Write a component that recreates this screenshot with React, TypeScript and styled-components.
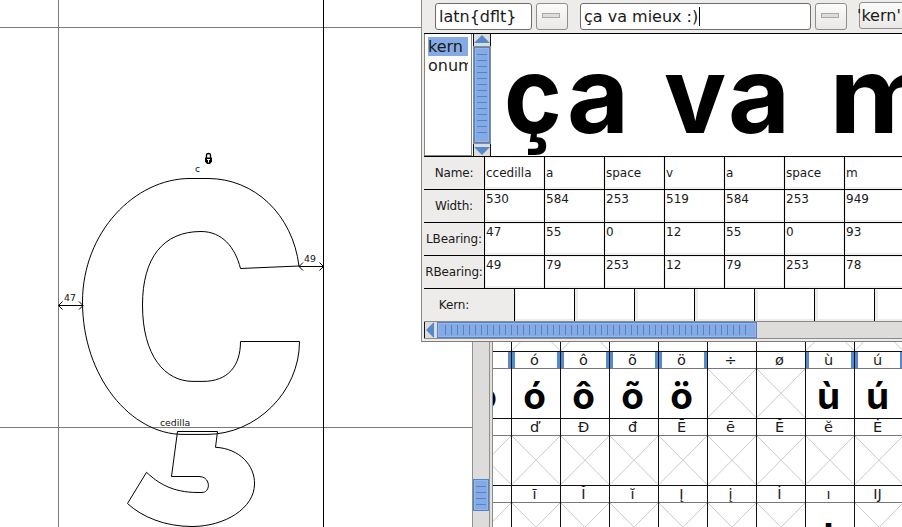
import React from "react";
import styled, { createGlobalStyle, css } from "styled-components";

const UI_FONT = '"DejaVu Sans", "Liberation Sans", sans-serif';

const GlobalStyle = createGlobalStyle`
  *, *::before, *::after { box-sizing: border-box; }
  body { margin: 0; background: #fff; font-family: ${UI_FONT}; color: #1a1a1a; }
`;

const Desktop = styled.main`
  position: relative;
  width: 902px;
  height: 527px;
  overflow: hidden;
  background: #fff;
`;

/* ---------- outline window ---------- */

const OutlineWindow = styled.section`
  position: absolute;
  inset: 0 auto 0 0;
  width: 490px;
  display: flex;
`;

const OutlineCanvas = styled.svg`
  flex: 0 0 472px;
  height: 527px;
  display: block;
  font: 9.3px ${UI_FONT};
`;

const OutlineScroll = styled.div`
  flex: 0 0 18px;
  padding-top: 479px;
  background: #dddcda;
  border-left: 1px solid #8f8f8d;
  border-right: 1px solid #8f8f8d;
`;

const grip = css`
  border: 1px solid #5184c8;
  background: #86abe4;
  box-shadow: inset 0 0 0 1px #94b7ea;
`;

const OutlineThumb = styled.div`
  ${grip}
  height: 32px;
  padding: 6px 2px 5px 2px;
  &::before {
    content: "";
    display: block;
    height: 19px;
    background: repeating-linear-gradient(to bottom, #4f85cb 0 1px, transparent 1px 6px);
  }
`;

/* ---------- font window ---------- */

const FontWindow = styled.section`
  position: absolute;
  left: 490px;
  top: 284px;
  width: 412px;
  height: 243px;
  overflow: hidden;
  border-left: 2px solid #e1e0de;
  box-shadow: inset 1px 0 0 #8a8a88;
  padding-left: 1px;
`;

const GlyphGrid = styled.div`
  display: grid;
  grid-template-columns: 19px repeat(8, 49px);
  grid-auto-rows: 67px;
`;

const Cell = styled.div`
  display: flex;
  flex-direction: column;
  overflow: hidden;
  border-top: 1px solid #111;
  border-right: 1px solid #111;
`;

const CellLabel = styled.div<{ $marked?: boolean }>`
  flex: 0 0 17px;
  border-bottom: 1px solid #777;
  box-shadow: ${(p) => (p.$marked ? "inset 3px 0 0 #5589ce, inset -3px 0 0 #5589ce" : "none")};
  font-size: 14.5px;
  line-height: 17px;
  padding-right: 3px;
  text-align: center;
  overflow: hidden;
`;

const CellGlyph = styled.div`
  flex: 1;
  display: flex;
  justify-content: center;
  padding-right: 3px;
  font: 700 37px/54px Inter, "Liberation Sans", sans-serif;
  color: #000;
`;

const CrossSvg = styled.svg`
  display: block;
  flex: none;
  width: 48px;
  height: 49px;
`;

const Cross = () => (
  <CrossSvg viewBox="0 0 48 49">
    <path d="M0 0L48 48.500M0 48.500L48 0" stroke="#c4c4c4" strokeWidth="0.900" />
  </CrossSvg>
);

type GlyphCell = { label: string; glyph?: string; blank?: boolean };

const gridRows: GlyphCell[][] = [
  [
    { label: "", blank: true },
    { label: "" },
    { label: "" },
    { label: "", blank: true },
    { label: "", blank: true },
    { label: "", blank: true },
    { label: "", blank: true },
    { label: "" },
    { label: "" },
  ],
  [
    { label: "", glyph: "ò" },
    { label: "ó", glyph: "ó" },
    { label: "ô", glyph: "ô" },
    { label: "õ", glyph: "õ" },
    { label: "ö", glyph: "ö" },
    { label: "÷" },
    { label: "ø" },
    { label: "ù", glyph: "ù" },
    { label: "ú", glyph: "ú" },
  ],
  ["", "ď", "Đ", "đ", "Ē", "ē", "Ĕ", "ĕ", "Ė"].map((label) => ({ label })),
  [
    ...["", "ī", "Ĭ", "ĭ", "Į", "į", "İ"].map((label) => ({ label })),
    { label: "ı", glyph: "ı" },
    { label: "Ĳ" },
  ],
];

const EdgeCell = styled(Cell)`
  ${CellGlyph} {
    justify-content: flex-end;
    padding-right: 14px;
  }
  ${CrossSvg} {
    margin-left: -30px;
  }
  ${CellLabel} {
    box-shadow: none;
  }
`;

const EdgeMark = styled(CellLabel)`
  && {
    box-shadow: inset -3px 0 0 #5589ce;
  }
`;

/* ---------- metrics window ---------- */

const MetricsWindow = styled.section`
  position: absolute;
  left: 421px;
  top: 0;
  width: 481px;
  height: 342px;
  overflow: hidden;
  background: #edeceb;
  border-left: 1px solid #8b8b89;
  border-bottom: 1px solid #7c7c7a;
  padding: 0 0 2px 2px;
  display: flex;
  flex-direction: column;
`;

const Toolbar = styled.div`
  flex: 0 0 33px;
  display: flex;
  align-items: flex-start;
  padding: 3px 0 0 11px;
  font-size: 16px;
  white-space: nowrap;
`;

const Field = styled.div<{ $width: number; $gap: number }>`
  flex: 0 0 ${(p) => p.$width}px;
  height: 27px;
  margin-right: ${(p) => p.$gap}px;
  padding-left: 3px;
  display: flex;
  align-items: center;
  border: 1px solid #6c6c69;
  border-radius: 3px;
  background: #fff;
`;

const Caret = styled.span`
  width: 1px;
  height: 19px;
  margin-left: 1px;
  background: #000;
`;

const MenuButton = styled.div<{ $gap: number }>`
  flex: 0 0 32px;
  height: 27px;
  margin-right: ${(p) => p.$gap}px;
  display: grid;
  place-items: center;
  padding-bottom: 2px;
  padding-right: 2px;
  border: 1px solid #8e8e8b;
  border-radius: 3px;
  background: linear-gradient(#fbfbfa, #e9e8e6);
  &::before {
    content: "";
    width: 18px;
    height: 5px;
    border: 1px solid #a9a9a6;
    background: #dedddb;
  }
`;

const KernButton = styled.div`
  flex: 0 0 60px;
  height: 27px;
  margin-top: -1px;
  border: 1px solid #8e8e8b;
  border-radius: 3px;
  background: linear-gradient(#fbfbfa, #e9e8e6);
  line-height: 25px;
  text-indent: -3px;
`;

const Preview = styled.div`
  flex: 0 0 123px;
  min-height: 0;
  height: 123px;
  overflow: hidden;
  display: flex;
  border-top: 1px solid #000;
  background: #fff;
`;

const FeatureList = styled.ul`
  flex: 0 0 48px;
  min-width: 0;
  margin: 0;
  padding: 3px;
  list-style: none;
  border: 1px solid #858583;
  border-top: 0;
  font-size: 16px;
`;

const Feature = styled.li<{ $selected?: boolean }>`
  height: 19px;
  line-height: 20px;
  overflow: hidden;
  background: ${(p) => (p.$selected ? "#86abe4" : "transparent")};
`;

const FeatureScroll = styled.div`
  flex: 0 0 18px;
  margin-left: 1px;
  display: flex;
  flex-direction: column;
  border-left: 1px solid #111;
  border-right: 1px solid #111;
  background: #dddcda;
`;

const Arrow = styled.svg`
  display: block;
  flex: none;
`;

const FeatureThumb = styled.div`
  ${grip}
  flex: 1;
  padding: 6px 2px;
  outline: 1px solid #8d8b86;
  &::before {
    content: "";
    display: block;
    width: 10px;
    height: 80px;
    background: repeating-linear-gradient(to bottom, #4f85cb 0 1px, transparent 1px 6px);
  }
`;

const Sample = styled.div`
  flex: 1;
  display: flex;
  min-width: 0;
  overflow: hidden;
  padding-left: 13px;
  font: 700 107px/121px Inter, "Liberation Sans", sans-serif;
  color: #000;
`;

const SampleGlyph = styled.span<{ $advance: number; $stretch: number }>`
  flex: 0 0 ${(p) => p.$advance}px;
  white-space: pre;
  transform: scaleX(${(p) => p.$stretch});
  transform-origin: left;
`;

const sample = [
  { char: "ç", advance: 62.5, stretch: 0.92 },
  { char: "a", advance: 69.7, stretch: 1 },
  { char: " ", advance: 27.2, stretch: 1 },
  { char: "v", advance: 64.2, stretch: 0.97 },
  { char: "a", advance: 69.7, stretch: 1 },
  { char: " ", advance: 31, stretch: 1 },
  { char: "m", advance: 113, stretch: 1.12 },
];

const MetricRow = styled.div`
  flex: 0 0 33px;
  display: flex;
  border-top: 1px solid #000;
  font-size: 12px;
`;

const MetricLabel = styled.div<{ $width?: number }>`
  flex: 0 0 ${(p) => p.$width ?? 60}px;
  line-height: 32px;
  text-align: center;
  white-space: nowrap;
  letter-spacing: -0.15px;
`;

const MetricCell = styled.div<{ $centered?: boolean }>`
  flex: 0 0 60px;
  padding-left: 1px;
  border-left: 1px solid #000;
  background: #fff;
  box-shadow: inset 1px 1px 0 #f0efee, inset -1px -2px 0 #f0efee;
  line-height: ${(p) => (p.$centered ? "32px" : "18px")};
`;

const KernCell = styled.div<{ $inset: number }>`
  flex: 0 0 60px;
  border-left: 1px solid #000;
  background: #fff;
  box-shadow: inset ${(p) => p.$inset}px 0 0 #edeceb, inset 0 -2px 0 #edeceb;
`;

const MetricsScroll = styled.div`
  flex: 1;
  display: flex;
  border-top: 1px solid #8b8b89;
  border-bottom: 1px solid #8b8b89;
  background: #dddcda;
`;

const MetricsThumb = styled.div`
  ${grip}
  width: 320px;
  padding: 2px 7px;
  &::before {
    content: "";
    display: block;
    height: 10px;
    background: repeating-linear-gradient(to right, #4f85cb 0 1px, transparent 1px 6px);
  }
`;

const metrics = [
  { title: "Name:", values: ["ccedilla", "a", "space", "v", "a", "space", "m"] },
  { title: "Width:", values: ["530", "584", "253", "519", "584", "253", "949"] },
  { title: "LBearing:", values: ["47", "55", "0", "12", "55", "0", "93"] },
  { title: "RBearing:", values: ["49", "79", "253", "12", "79", "253", "78"] },
];

function Outline() {
  return (
    <OutlineCanvas viewBox="0 0 472 527">
      <g shapeRendering="crispEdges" stroke="#7b7b76" fill="none">
        <path d="M0 27.5H472M0 427.5H472M58.5 0V527" />
        <path d="M323.5 0V527" stroke="#000" />
      </g>
      <g fill="none" stroke="#000" strokeWidth="1">
        <path d="M299 266C292.500 214 254 178.500 208 178.500H190C135 178.500 82.500 232 82.500 302C82.500 377 131 434.400 183 434.400H207C256 434.400 299.500 392 299.500 341.500H240.500C240.500 366 228 381.400 203 381.400H193C165 381.400 142.500 356 142.500 305C142.500 258 163 231.500 201 231.500C222 231.500 235 247 240.500 268.500Z" />
        <path d="M177.500 431.500H217.500L215.500 447.300C240 448.500 255 466 254.500 484C254.500 508 225 526.500 192 526.500C165 526.500 142 517 127.500 503.500L146.500 472.300C158 483 172 492.500 198 492.500H202C211 492.500 211 476.500 199 476.500H171.500Z" />
        <path d="M59 305.500H83M62.500 301.500L58.500 305.500L62.500 309.500M79 301.500L83 305.500L79 309.500M299 266.500H323M303 262.500L299 266.500L303 270.500M319.500 262.500L323.500 266.500L319.500 270.500" />
      </g>
      <g fill="#111">
        <text x="195" y="172">c</text>
        <text x="160" y="426">cedilla</text>
        <text x="64" y="301">47</text>
        <text x="304" y="262">49</text>
      </g>
      <path d="M206.500 158V155Q206.500 153.500 208.500 153.500Q210.500 153.500 210.500 155V158" fill="none" stroke="#000" strokeWidth="1.300" />
      <path d="M205 157.500H212V161.500L210 164H207L205 161.500Z" fill="#000" />
      <path d="M207 159.500H210M208.500 160V162.500" stroke="#fff" strokeWidth="1" />
    </OutlineCanvas>
  );
}

function FontGrid() {
  return (
    <GlyphGrid>
      {gridRows.map((row, r) =>
        row.map((cell, c) => {
          const Box = c === 0 ? EdgeCell : Cell;
          const Label = c === 0 && cell.glyph ? EdgeMark : CellLabel;
          return (
            <Box key={`${r}-${c}`}>
              <Label $marked={Boolean(cell.glyph) && cell.glyph !== "ı"}>{cell.label}</Label>
              {cell.glyph ? <CellGlyph>{cell.glyph}</CellGlyph> : cell.blank ? null : <Cross />}
            </Box>
          );
        })
      )}
    </GlyphGrid>
  );
}

export default function App() {
  return (
    <>
      <GlobalStyle />
      <Desktop>
        <OutlineWindow>
          <Outline />
          <OutlineScroll>
            <OutlineThumb />
          </OutlineScroll>
        </OutlineWindow>
        <FontWindow>
          <FontGrid />
        </FontWindow>
        <MetricsWindow>
          <Toolbar>
            <Field $width={97} $gap={4}>{"latn{dflt}"}</Field>
            <MenuButton $gap={12} />
            <Field $width={231} $gap={4}>
              ça va mieux :)
              <Caret />
            </Field>
            <MenuButton $gap={12} />
            <KernButton>'kern'</KernButton>
          </Toolbar>
          <Preview>
            <FeatureList>
              <Feature $selected>kern</Feature>
              <Feature>onum</Feature>
            </FeatureList>
            <FeatureScroll>
              <Arrow width="16" height="13" viewBox="0 0 16 13">
                <path d="M0 9L8 1L16 9Z" fill="#5589ce" />
              </Arrow>
              <FeatureThumb />
              <Arrow width="16" height="13" viewBox="0 0 16 13">
                <path d="M0 4L8 12L16 4Z" fill="#5589ce" />
              </Arrow>
            </FeatureScroll>
            <Sample>
              {sample.map((g, i) => (
                <SampleGlyph key={i} $advance={g.advance} $stretch={g.stretch}>
                  {g.char}
                </SampleGlyph>
              ))}
            </Sample>
          </Preview>
          {metrics.map((m) => (
            <MetricRow key={m.title}>
              <MetricLabel>{m.title}</MetricLabel>
              {m.values.map((v, i) => (
                <MetricCell key={i} $centered={m.title === "Name:"}>
                  {v}
                </MetricCell>
              ))}
            </MetricRow>
          ))}
          <MetricRow>
            <MetricLabel $width={60}>Kern:</MetricLabel>
            <MetricLabel $width={30} />
            {[1, 3, 3, 3, 3, 3, 3].map((inset, i) => (
              <KernCell key={i} $inset={inset} />
            ))}
          </MetricRow>
          <MetricsScroll>
            <Arrow width="13" height="16" viewBox="0 0 13 16">
              <path d="M.5 0V16" stroke="#111" />
              <path d="M10 0L2 8L10 16Z" fill="#5589ce" />
            </Arrow>
            <MetricsThumb />
          </MetricsScroll>
        </MetricsWindow>
      </Desktop>
    </>
  );
}
